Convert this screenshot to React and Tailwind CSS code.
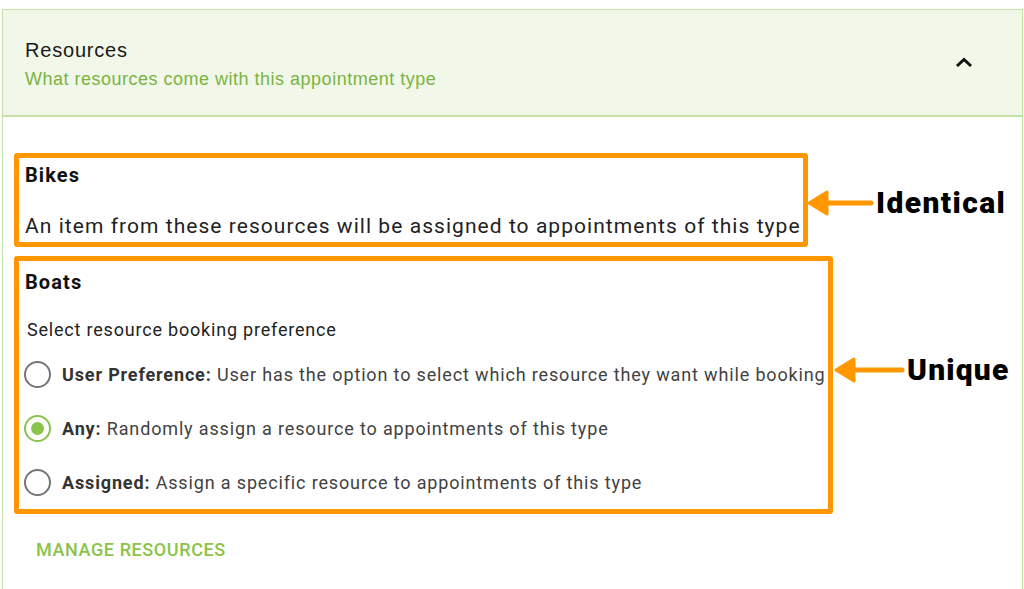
import React from "react";

function Radio({ checked }) {
  if (checked) {
    return (
      <span className="flex h-[27px] w-[27px] shrink-0 items-center justify-center rounded-full border-[2.5px] border-[#8bc34a]">
        <span className="h-[13px] w-[13px] rounded-full bg-[#8bc34a]" />
      </span>
    );
  }
  return <span className="h-[27px] w-[27px] shrink-0 rounded-full border-[2.5px] border-[#757575]" />;
}

function Option({ checked, label, text }) {
  return (
    <div className="flex h-[27px] items-center gap-[11px]">
      <Radio checked={checked} />
      <div className="whitespace-nowrap text-[18px] text-[#424242] tracking-[0.85px]">
        <span className="font-bold text-[#333333]">{label}</span> {text}
      </div>
    </div>
  );
}

function Arrow({ width }) {
  return (
    <svg width={width} height="28" viewBox={`0 0 ${width} 28`} className="block">
      <path d={`M3 14 L21 3 L21 25 Z`} fill="#ff9800" stroke="#ff9800" strokeWidth="3" strokeLinejoin="round" />
      <line x1="20" y1="14" x2={width - 3} y2="14" stroke="#ff9800" strokeWidth="5" strokeLinecap="round" />
    </svg>
  );
}

export default function App() {
  return (
    <div className="relative h-[589px] w-[1024px] overflow-hidden bg-white" style={{ fontFamily: "Roboto, 'Noto Sans', sans-serif" }}>
      <div className="ml-[2px] mt-[9px] h-[600px] w-[1021px] border border-b-0 border-[#c5e1a5]">
        <div className="flex h-[107px] items-center justify-between border-b-[2px] border-[#c5e1a5] bg-[#f1f7e9] pl-[22px] pr-[49px]" style={{ fontFamily: "'Liberation Sans', Arial, sans-serif" }}>
          <div className="flex flex-col gap-[6px] pt-[2px]">
            <div className="text-[20px] leading-[24px] tracking-[0.8px] text-[#1a1a1a]">Resources</div>
            <div className="text-[18px] leading-[22px] tracking-[0.5px] text-[#7cb342]">What resources come with this appointment type</div>
          </div>
          <svg width="18" height="11" viewBox="0 0 18 11" className="mt-[0px]">
            <path d="M2 9 L9 2.5 L16 9" fill="none" stroke="#111" strokeWidth="3" />
          </svg>
        </div>

        <div className="flex flex-col pl-[11px] pt-[36px]">
          <div className="flex h-[94px] w-[794px] flex-col rounded-[3px] border-[5px] border-[#ff9800] pl-[6px] pt-[5px]">
            <div className="text-[20px] font-bold leading-[24px] tracking-[1.1px] text-[#111]">Bikes</div>
            <div className="mt-[26px] whitespace-nowrap text-[21px] leading-[26px] tracking-[1.05px] text-[#222]">
              An item from these resources will be assigned to appointments of this type
            </div>
          </div>

          <div className="mt-[9px] flex h-[258px] w-[819px] flex-col rounded-[3px] border-[5px] border-[#ff9800] pl-[5px] pt-[9px]">
            <div className="pl-[1px] text-[20px] font-bold leading-[24px] tracking-[1.1px] text-[#111]">Boats</div>
            <div className="mt-[25px] pl-[3px] text-[18px] leading-[22px] tracking-[0.8px] text-[#222]">Select resource booking preference</div>
            <div className="mt-[20px] flex flex-col gap-[27px]">
              <Option label="User Preference:" text="User has the option to select which resource they want while booking" />
              <Option checked label="Any:" text="Randomly assign a resource to appointments of this type" />
              <Option label="Assigned:" text="Assign a specific resource to appointments of this type" />
            </div>
          </div>

          <div className="mt-[25px] pl-[22px] text-[18px] font-medium leading-[22px] tracking-[0.6px] text-[#8bc34a]">MANAGE RESOURCES</div>
        </div>
      </div>

      <div className="absolute left-[806px] top-[187px] flex items-center gap-[2px]">
        <Arrow width={68} />
        <span className="text-[30px] font-black leading-[32px] tracking-[1.4px] text-black">Identical</span>
      </div>
      <div className="absolute left-[833px] top-[354px] flex items-center gap-[2px]">
        <Arrow width={72} />
        <span className="text-[30px] font-black leading-[32px] tracking-[1.2px] text-black">Unique</span>
      </div>
    </div>
  );
}
